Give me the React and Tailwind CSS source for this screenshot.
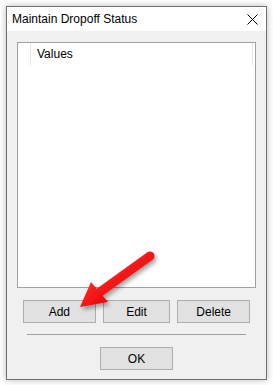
import React from "react";

const font = { fontFamily: '"Liberation Sans", "Segoe UI", Arial, sans-serif' };

function Btn({ children, className = "" }) {
  return (
    <button
      className={`h-[23px] border border-[#adadad] bg-[#e1e1e1] text-[12px] text-black ${className}`}
      style={font}
    >
      {children}
    </button>
  );
}

export default function App() {
  return (
    <div className="relative w-[273px] h-[385px] bg-white overflow-hidden pl-[6px] pt-[6px]" style={font}>
      <div className="w-[261px] h-[374px] border border-[#6f6f6f] bg-[#f0f0f0] flex flex-col shadow-[0_0_7px_rgba(0,0,0,0.28)]">
        <div className="h-[24px] bg-white flex items-center justify-between pl-[5px] pr-[8px]">
          <span className="text-[12px] text-black leading-none">Maintain Dropoff Status</span>
          <svg width="11" height="11" viewBox="0 0 11 11">
            <path d="M0.5 0.5 L10.5 10.5 M10.5 0.5 L0.5 10.5" stroke="#000" strokeWidth="1" />
          </svg>
        </div>
        <div className="flex-1 flex flex-col px-[10px] pt-[11px]">
          <div className="h-[246px] border border-[#a0a0a0] bg-white">
            <div className="flex h-[22px]">
              <div className="w-[13px] border-r border-[#e5e5e5]" />
              <div className="flex-1 pl-[6px] text-[12px] text-black flex items-center border-r border-[#e5e5e5] mr-[2px]">
                Values
              </div>
            </div>
          </div>
          <div className="flex gap-[7px] mt-[12px] px-[6px]">
            <Btn className="w-[73px]">Add</Btn>
            <Btn className="w-[68px]">Edit</Btn>
            <Btn className="w-[73px]">Delete</Btn>
          </div>
          <div className="mx-[10px] mt-[11px] h-px bg-[#a0a0a0]" />
          <div className="flex justify-center mt-[12px]">
            <Btn className="w-[73px]">OK</Btn>
          </div>
        </div>
      </div>
      <svg className="absolute inset-0 pointer-events-none" width="273" height="385" viewBox="0 0 273 385">
        <defs>
          <filter id="sh" x="-20%" y="-20%" width="140%" height="140%">
            <feDropShadow dx="2" dy="3" stdDeviation="2" floodColor="#000" floodOpacity="0.35" />
          </filter>
          <linearGradient id="rg" x1="0" y1="0" x2="1" y2="1">
            <stop offset="0" stopColor="#ff3030" />
            <stop offset="1" stopColor="#e80000" />
          </linearGradient>
        </defs>
        <g filter="url(#sh)">
          <line x1="150" y1="256" x2="100" y2="292" stroke="url(#rg)" strokeWidth="9" strokeLinecap="round" />
          <polygon points="80,307 91,282 108,302" fill="url(#rg)" />
        </g>
      </svg>
    </div>
  );
}
